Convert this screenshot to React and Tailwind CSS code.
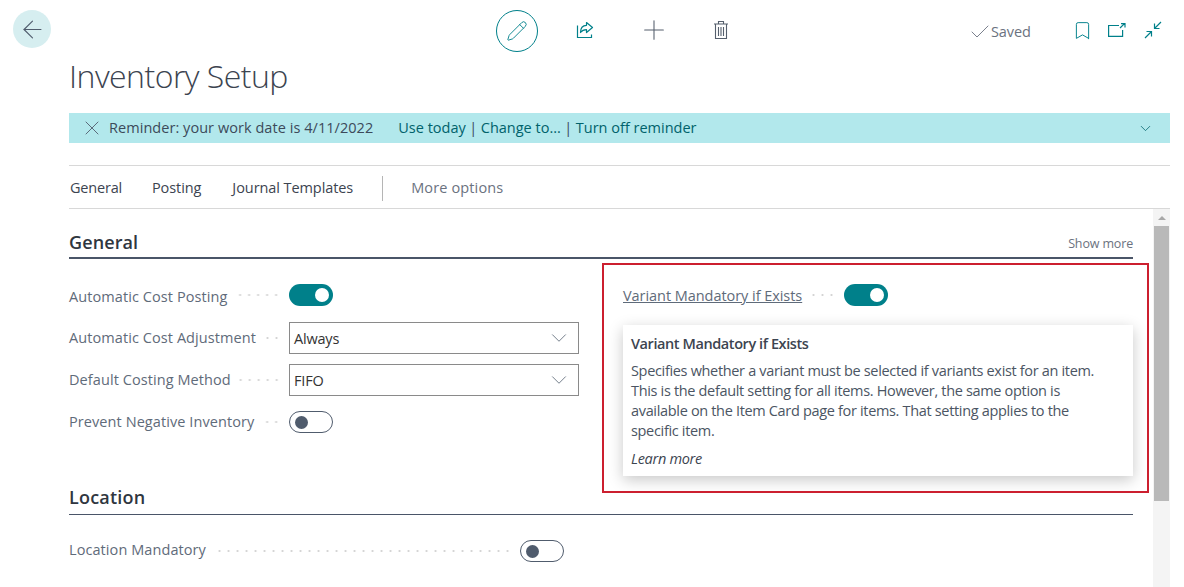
import { ArrowLeft, ChevronDown, Pencil, Plus, X, Check, Bookmark } from "lucide-react";

function ShareIcon() {
  return (
    <svg width="20" height="20" viewBox="0 0 20 20" fill="none" stroke="#00808a" strokeWidth="1.2">
      <path d="M2.500 5.500v12h14v-3" />
      <path d="M11.500 2.500l6 5-6 5v-2.800c-2.500 0-4.500.8-6 2.800 0-4 2-7 6-7.200z" strokeLinejoin="round" />
    </svg>
  );
}

function TrashIcon() {
  return (
    <svg width="16" height="20" viewBox="0 0 16 20" fill="none" stroke="#555f6d" strokeWidth="1.1">
      <path d="M1 4h14M5.500 4V1.500h5V4M2.500 4v14.500h11V4M5.500 7v9M8 7v9M10.500 7v9" />
    </svg>
  );
}

function PopoutIcon() {
  return (
    <svg width="18" height="14" viewBox="0 0 18 14" fill="none" stroke="#00808a" strokeWidth="1.200">
      <path d="M11 2.500H.6v10.900h14V7M12 5l4.500-4.400M13 .6h4v3.900" />
    </svg>
  );
}

function CollapseIcon() {
  return (
    <svg width="20" height="20" viewBox="0 0 20 20" fill="none" stroke="#00808a" strokeWidth="1.2">
      <path d="M18 2l-6.500 6.500M11.500 3.500v5h5M2 18l6.500-6.500M3.500 11.500h5v5" />
    </svg>
  );
}

function Toggle({ on }) {
  if (on) {
    return (
      <span className="flex h-[22px] w-[44px] shrink-0 items-center justify-end rounded-full bg-[#00808a] pr-[4px]">
        <span className="h-[14px] w-[14px] rounded-full bg-white" />
      </span>
    );
  }
  return (
    <span className="flex h-[22px] w-[44px] shrink-0 items-center rounded-full border border-[#505c6d] bg-white pl-[5px]">
      <span className="h-[13px] w-[13px] rounded-full bg-[#505c6d]" />
    </span>
  );
}

function Leader() {
  return <span className="mx-[8px] h-[4px] min-w-0 flex-1 bg-[radial-gradient(circle,#d4d4d4_1px,transparent_1.2px)] bg-[length:9px_4px] bg-right" />;
}

function Field({ label, children, className = "", labelClass = "" }) {
  return (
    <div className={`flex items-center text-[14.5px] tracking-[0.08px] text-[#5f6b7a] ${className}`}>
      <span className={`shrink-0 ${labelClass}`}>{label}</span>
      <Leader />
      {children}
    </div>
  );
}

function SelectBox({ value }) {
  return (
    <div className="flex h-[32px] w-[290px] shrink-0 items-center justify-between border border-[#8a8a8a] pl-[4px] pr-[6px] text-[14.500px] tracking-[-0.2px] text-[#333]">
      <span className="pt-[1px]">{value}</span>
      <ChevronDown size={26} strokeWidth={0.8} className="text-[#5f6b7a]" />
    </div>
  );
}

export default function App() {
  return (
    <div className="h-[587px] w-[1184px] overflow-hidden bg-white font-['Open_Sans','Noto_Sans',sans-serif] tracking-[-0.2px] text-[#333]">
      {/* Top bar */}
      <div className="flex h-[52px] items-start pl-[13px] pt-[10px]">
        <button className="flex h-[38px] w-[38px] items-center justify-center rounded-full bg-[#d6eef0] text-[#505c6d]">
          <ArrowLeft size={29} strokeWidth={0.9} />
        </button>
        <button className="ml-[445px] flex h-[42px] w-[42px] items-center justify-center rounded-full border border-[#00808a] text-[#00808a]">
          <Pencil size={22} strokeWidth={1} />
        </button>
        <div className="ml-[37px] mt-[10px]"><ShareIcon /></div>
        <Plus size={32} strokeWidth={0.8} className="ml-[43px] mt-[4px] text-[#555f6d]" />
        <div className="ml-[43px] mt-[10px]"><TrashIcon /></div>
        <div className="ml-[239px] mt-[10px] flex items-center text-[14.500px] tracking-[-0.1px] text-[#6b7280]">
          <Check size={24} strokeWidth={0.9} className="-mr-[1px]" />
          Saved
        </div>
        <Bookmark size={21} strokeWidth={1.1} className="ml-[41px] mt-[10px] text-[#00808a]" />
        <div className="ml-[15px] mt-[13px]"><PopoutIcon /></div>
        <div className="ml-[17px] mt-[10px]"><CollapseIcon /></div>
      </div>

      <div className="ml-[69px] w-[1101px]">
        <h1 className="mt-[1px] h-[60px] text-[32px] leading-[46px] font-light tracking-[-0.53px] text-[#3c4450]">Inventory Setup</h1>

        {/* Reminder */}
        <div className="flex h-[30px] items-center bg-[#b2e8ec] pl-[11px] pr-[16px] text-[14.500px] tracking-[0px] text-[#3c4a5a]">
          <X size={24} strokeWidth={0.9} className="mr-[5px] text-[#505c6d]" />
          <span className="tracking-[0.05px]">Reminder: your work date is 4/11/2022</span>
          <span className="ml-[25px] text-[#00626b]">Use today</span>
          <span className="mx-[3.5px]">|</span>
          <span className="text-[#00626b]">Change to...</span>
          <span className="mx-[3.5px]">|</span>
          <span className="text-[#00626b]">Turn off reminder</span>
          <ChevronDown size={17} strokeWidth={1.1} className="ml-auto text-[#00626b]" />
        </div>

        {/* Tabs */}
        <div className="mt-[22px] flex h-[44px] items-center border-y border-[#d8d8d8] pl-[1px] pt-[2px] text-[14.500px] tracking-[-0.08px] text-[#3c4450]">
          <span className="tracking-[-0.2px]">General</span>
          <span className="ml-[30px]">Posting</span>
          <span className="ml-[31px]">Journal Templates</span>
          <span className="ml-[29px] h-[25px] w-px bg-[#b5b5b5]" />
          <span className="ml-[28px] tracking-[0.13px] text-[#6b7280]">More options</span>
        </div>

        <div className="flex h-[379px]">
          <div className="w-[1064px] shrink-0">
            {/* General */}
            <div className="mt-[20px] flex h-[30px] items-center justify-between border-b-2 border-[#4a5568] pb-[2px]">
              <h2 className="text-[18px] leading-[26px] font-semibold tracking-[0.1px] text-[#2f3640]">General</h2>
              <span className="pt-[5px] text-[12.500px] tracking-[-0.15px] text-[#6b7280]">Show more</span>
            </div>

            <div className="grid grid-cols-[510px_510px] gap-x-[44px]">
              <div className="mt-[25px] flex flex-col">
                <Field label="Automatic Cost Posting" className="h-[22px]" labelClass="pt-[3px]">
                  <span className="w-[290px] shrink-0"><Toggle on /></span>
                </Field>
                <Field label="Automatic Cost Adjustment" className="mt-[16px] h-[32px]"><SelectBox value="Always" /></Field>
                <Field label="Default Costing Method" className="mt-[10px] h-[32px]"><SelectBox value="FIFO" /></Field>
                <Field label="Prevent Negative Inventory" className="mt-[15px] h-[22px]">
                  <span className="w-[290px] shrink-0"><Toggle /></span>
                </Field>
              </div>

              <div className="relative mt-[25px]">
                <div className="flex h-[22px] items-center text-[14.500px] tracking-[-0.05px] text-[#5f6b7a]">
                  <span className="pt-[2px] underline">Variant Mandatory if Exists</span>
                  <span className="mx-[8px] h-[4px] w-[26px] bg-[radial-gradient(circle,#d4d4d4_1px,transparent_1.2px)] bg-[length:9px_4px] bg-right" />
                  <Toggle on />
                </div>

                {/* Tooltip */}
                <div className="absolute left-0 top-[41px] h-[151px] w-[510px] bg-white px-[8px] pt-[9px] shadow-[0_4px_14px_rgba(0,0,0,0.22)]">
                  <div className="text-[14.500px] leading-[20px] font-semibold tracking-[-0.42px] text-[#3c4450]">Variant Mandatory if Exists</div>
                  <p className="mt-[7px] max-w-[470px] text-[14.500px] leading-[20px] tracking-[-0.33px] text-[#4b5563]">
                    Specifies whether a variant must be selected if variants exist for an item. This is the default setting for all items. However, the same option is available on the Item Card page for items. That setting applies to the specific item.
                  </p>
                  <div className="mt-[8px] text-[14.500px] leading-[20px] italic tracking-[-0.3px] text-[#3c4450]">Learn more</div>
                </div>

                {/* Red highlight */}
                <div className="absolute left-[-21px] top-[-21px] h-[230px] w-[547px] border-2 border-[#cc1f2f]" />
              </div>
            </div>

            {/* Location */}
            <div className="mt-[51px] flex h-[31px] items-center border-b border-[#4a5568] pb-[4px]">
              <h2 className="text-[18px] leading-[26px] font-semibold tracking-[0.2px] text-[#2f3640]">Location</h2>
            </div>
            <Field label="Location Mandatory" className="mt-[25px] h-[22px] w-[495px]" labelClass="pb-[2px]"><Toggle /></Field>
          </div>

          {/* Scrollbar */}
          <div className="ml-[20px] flex w-[17px] flex-col items-center bg-[#f4f4f4]">
            <span className="mt-[7px] h-0 w-0 border-x-[4px] border-b-[4px] border-x-transparent border-b-[#a8a8a8]" />
            <span className="mt-[6px] h-[275px] w-[15px] bg-[#b9b9b9]" />
          </div>
        </div>
      </div>
    </div>
  );
}
